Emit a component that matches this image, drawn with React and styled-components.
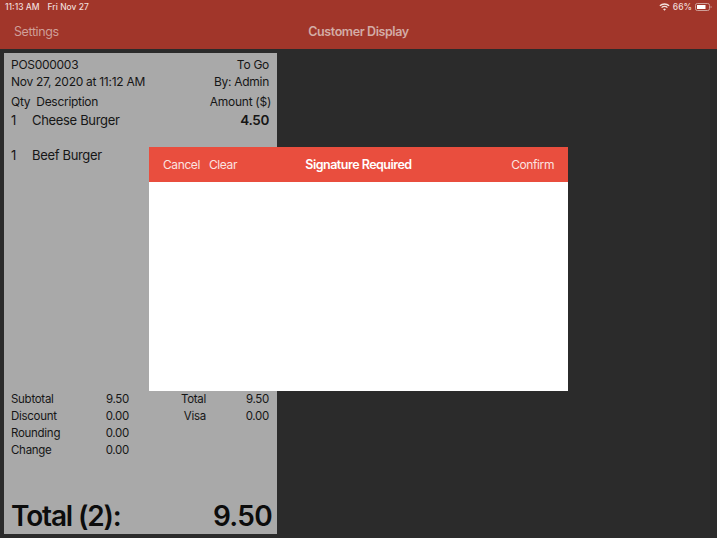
import React from "react";
import styled, { createGlobalStyle } from "styled-components";

const Global = createGlobalStyle`
  html, body { margin: 0; padding: 0; background: #2b2b2b; }
  * { box-sizing: border-box; }
  body { font-family: Inter, "Liberation Sans", sans-serif; }
`;

const Page = styled.div`
  position: relative;
  width: 717px;
  height: 538px;
  overflow: hidden;
  background: #2b2b2b;
  display: flex;
  flex-direction: column;
`;

const Header = styled.header`
  height: 49px;
  flex: none;
  background: #a1362a;
  display: flex;
  flex-direction: column;
`;

const StatusBar = styled.div`
  height: 14px;
  padding: 0 5px;
  display: flex;
  align-items: center;
  justify-content: space-between;
  color: #f0dcd9;
  font-size: 8.5px;
  font-weight: 500;
`;

const StatusGroup = styled.div`
  display: flex;
  align-items: center;
  gap: ${p => p.$gap || 8}px;
`;

const NavBar = styled.div`
  flex: 1;
  padding: 0 14px;
  display: grid;
  grid-template-columns: 1fr auto 1fr;
  align-items: center;
  font-size: 12.5px;
  letter-spacing: -0.4px;
`;

const NavLink = styled.span`
  color: #cf9f98;
`;

const NavTitle = styled.span`
  color: #d3aca6;
  font-weight: 600;
`;

const Body = styled.main`
  flex: 1;
  padding: 4px;
  display: flex;
`;

const Receipt = styled.section`
  width: 273px;
  height: 481px;
  background: #a9a9a9;
  color: #161616;
  padding: 3px 8px 0 7px;
  display: flex;
  flex-direction: column;
  letter-spacing: -0.28px;
`;

const Row = styled.div`
  height: ${p => p.$h}px;
  display: flex;
  align-items: center;
  justify-content: space-between;
  font-size: 12px;
`;

const Cells = styled.div`
  display: flex;
  gap: ${p => p.$gap}px;
`;

const Qty = styled.span`
  width: 21px;
`;

const Overhang = styled.span`
  margin-right: -2px;
`;

const Price = styled.span`
  font-weight: 600;
  font-size: 13.5px;
`;

const ItemRow = styled.div`
  height: ${p => p.$h}px;
  display: flex;
  align-items: center;
  justify-content: space-between;
  font-size: 13px;
  letter-spacing: -0.33px;
`;

const Spacer = styled.div`
  flex: 1;
`;

const Totals = styled.div`
  display: grid;
  grid-template-columns: 70px 48px 77px 63px;
  grid-auto-rows: 17px;
  align-items: center;
  font-size: 11.5px;
  margin-bottom: 42px;
`;

const TotalCell = styled.span`
  text-align: ${p => (p.$left ? "left" : "right")};
`;

const GrandTotal = styled.div`
  height: 31px;
  margin: 0 -3px 3px 0;
  display: flex;
  align-items: center;
  justify-content: space-between;
  font-size: 28px;
  font-weight: 600;
  letter-spacing: -0.7px;
  color: #0c0c0c;
`;

const GrandLabel = styled.span`
  letter-spacing: -1.15px;
`;

const Modal = styled.div`
  position: absolute;
  left: 149px;
  top: 147px;
  width: 419px;
  height: 244px;
  background: #fff;
  display: flex;
  flex-direction: column;
`;

const ModalBar = styled.div`
  height: 35px;
  flex: none;
  background: #e94e3e;
  padding: 0 14px;
  display: grid;
  grid-template-columns: 1fr auto 1fr;
  align-items: center;
  color: #fbe3e0;
  font-size: 12px;
  letter-spacing: -0.4px;
`;

const BarLeft = styled.div`
  display: flex;
  gap: 9px;
`;

const BarTitle = styled.span`
  color: #fff;
  font-size: 12.5px;
  font-weight: 600;
  letter-spacing: -0.5px;
`;

const BarRight = styled.span`
  text-align: right;
`;

const Wifi = () => (
  <svg width="11" height="8" viewBox="0 0 12 9" fill="none" stroke="#f3e0dc" strokeWidth="1.5">
    <path d="M.8 3.2a7.6 7.6 0 0 1 10.4 0" />
    <path d="M2.7 5.2a4.8 4.8 0 0 1 6.6 0" />
    <path d="M6 8.6 4.4 7a2.3 2.3 0 0 1 3.2 0z" fill="#f3e0dc" stroke="none" />
  </svg>
);

const Battery = () => (
  <svg width="17" height="8" viewBox="0 0 17 8">
    <rect x=".5" y=".5" width="14" height="7" rx="1.8" fill="none" stroke="#cf9f98" />
    <rect x="2" y="2" width="8.5" height="4" fill="#fff" />
    <path d="M15.6 2.7c.7.2 1 .7 1 1.3s-.3 1.1-1 1.3z" fill="#cf9f98" />
  </svg>
);

const totals = [
  ["Subtotal", "9.50", "Total", "9.50"],
  ["Discount", "0.00", "Visa", "0.00"],
  ["Rounding", "0.00", "", ""],
  ["Change", "0.00", "", ""],
];

export default function App() {
  return (
    <Page>
      <Global />
      <Header>
        <StatusBar>
          <StatusGroup>
            <span>11:13 AM</span>
            <span>Fri Nov 27</span>
          </StatusGroup>
          <StatusGroup $gap={3}>
            <Wifi />
            <span>66%</span>
            <Battery />
          </StatusGroup>
        </StatusBar>
        <NavBar>
          <NavLink>Settings</NavLink>
          <NavTitle>Customer Display</NavTitle>
        </NavBar>
      </Header>
      <Body>
        <Receipt>
          <Row $h={17}>
            <span>POS000003</span>
            <span>To Go</span>
          </Row>
          <Row $h={17}>
            <span>Nov 27, 2020 at 11:12 AM</span>
            <span>By: Admin</span>
          </Row>
          <Row $h={23}>
            <Cells $gap={6}>
              <span>Qty</span>
              <span>Description</span>
            </Cells>
            <Overhang>Amount ($)</Overhang>
          </Row>
          <ItemRow $h={14}>
            <Cells $gap={0}>
              <Qty>1</Qty>
              <span>Cheese Burger</span>
            </Cells>
            <Price>4.50</Price>
          </ItemRow>
          <ItemRow $h={56}>
            <Cells $gap={0}>
              <Qty>1</Qty>
              <span>Beef Burger</span>
            </Cells>
          </ItemRow>
          <Spacer />
          <Totals>
            {totals.map(([a, b, c, d]) => (
              <React.Fragment key={a}>
                <TotalCell $left>{a}</TotalCell>
                <TotalCell>{b}</TotalCell>
                <TotalCell>{c}</TotalCell>
                <TotalCell>{d}</TotalCell>
              </React.Fragment>
            ))}
          </Totals>
          <GrandTotal>
            <GrandLabel>Total (2):</GrandLabel>
            <span>9.50</span>
          </GrandTotal>
        </Receipt>
      </Body>
      <Modal>
        <ModalBar>
          <BarLeft>
            <span>Cancel</span>
            <span>Clear</span>
          </BarLeft>
          <BarTitle>Signature Required</BarTitle>
          <BarRight>Confirm</BarRight>
        </ModalBar>
      </Modal>
    </Page>
  );
}
